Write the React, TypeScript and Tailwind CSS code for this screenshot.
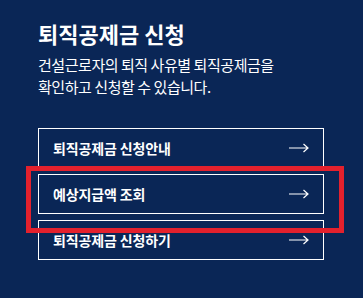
import React from 'react'

// ── Helper components ─────────────────────────────────────────────────────────

function Arrow() {
  return (
    <svg width="20" height="10" viewBox="0 0 20 10" fill="none" className="flex-shrink-0">
      <path d="M0 5H19M14.5 1L19 5L14.5 9" stroke="white" strokeWidth="1.2" />
    </svg>
  )
}

function LinkRow({ label }: { label: string }) {
  return (
    <div className="flex items-center justify-between h-10 pl-[14px] pr-[14px] border border-white">
      <span className="text-[14px] font-semibold text-white tracking-[-0.01em]">{label}</span>
      <Arrow />
    </div>
  )
}

// ── Main Page ─────────────────────────────────────────────────────────────────

const links = ['퇴직공제금 신청안내', '예상지급액 조회', '퇴직공제금 신청하기']

export default function App() {
  return (
    <div
      className="relative w-[363px] h-[298px] bg-[#0a2656] overflow-hidden"
      style={{ fontFamily: '"Noto Sans CJK KR", "Noto Sans", sans-serif' }}
    >
      <div className="pl-[38px] pr-[39px] pt-[17px]">
        <h1 className="text-[22px] leading-[32px] font-bold text-white">퇴직공제금 신청</h1>
        <p className="mt-[5px] text-[15px] leading-[22px] text-white tracking-[-0.03em]">
          건설근로자의 퇴직 사유별 퇴직공제금을
          <br />
          확인하고 신청할 수 있습니다.
        </p>
        <div className="mt-[30px] flex flex-col gap-[6px]">
          {links.map((l) => <LinkRow key={l} label={l} />)}
        </div>
      </div>

      {/* 강조 표시 */}
      <div className="absolute left-[26px] top-[166px] w-[318px] h-[67px] border-[5px] border-[#e3212d]" />
    </div>
  )
}
